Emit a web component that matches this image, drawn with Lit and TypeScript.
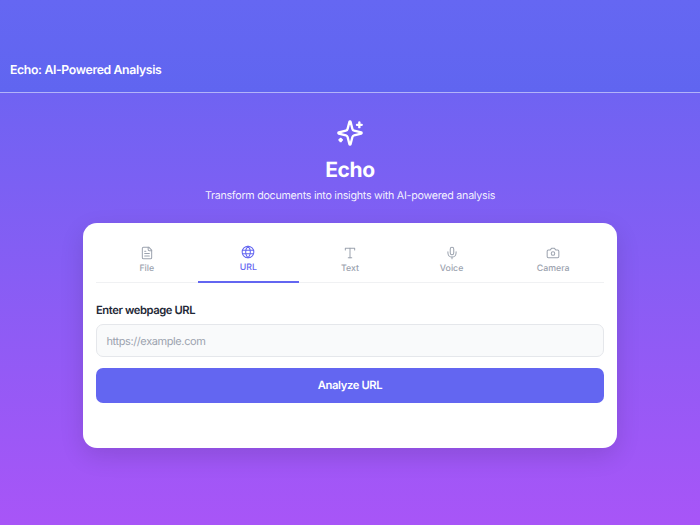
import { LitElement, html, css, svg } from "lit";
import { customElement } from "lit/decorators.js";

const icons: Record<string, unknown> = {
  File: svg`<path d="M15 2H6a2 2 0 0 0-2 2v16a2 2 0 0 0 2 2h12a2 2 0 0 0 2-2V7Z"/><path d="M14 2v4a2 2 0 0 0 2 2h4"/><path d="M10 9H8"/><path d="M16 13H8"/><path d="M16 17H8"/>`,
  URL: svg`<circle cx="12" cy="12" r="10"/><path d="M12 2a14.5 14.5 0 0 0 0 20 14.5 14.5 0 0 0 0-20"/><path d="M3 9h18"/><path d="M3 15h18"/>`,
  Text: svg`<path d="M4 7V4h16v3"/><path d="M9 20h6"/><path d="M12 4v16"/>`,
  Voice: svg`<path d="M12 2a3 3 0 0 0-3 3v7a3 3 0 0 0 6 0V5a3 3 0 0 0-3-3Z"/><path d="M19 10v2a7 7 0 0 1-14 0v-2"/><path d="M12 19v3"/>`,
  Camera: svg`<path d="M14.5 4h-5L7 7H4a2 2 0 0 0-2 2v9a2 2 0 0 0 2 2h16a2 2 0 0 0 2-2V9a2 2 0 0 0-2-2h-3l-2.5-3z"/><circle cx="12" cy="13" r="3"/>`,
};

const tabs = ["File", "URL", "Text", "Voice", "Camera"];

@customElement("app-root")
export class AppRoot extends LitElement {
  static styles = css`
    :host {
      display: block;
      height: 525px;
      overflow: hidden;
      background: linear-gradient(180deg, #6366f1 0%, #a855f7 100%);
      font-family: Inter, "Noto Sans", sans-serif;
      text-rendering: geometricPrecision;
      color: #fff;
    }
    .bar {
      height: 93px;
      box-sizing: border-box;
      border-bottom: 1px solid rgba(255, 255, 255, 0.5);
      background: linear-gradient(180deg, #6567f2, #6065f0);
      display: flex;
      align-items: flex-end;
      padding: 0 10px 13px;
      font-size: 12.25px;
      letter-spacing: -0.35px;
      font-weight: 600;
      line-height: 18px;
    }
    .hero {
      display: flex;
      flex-direction: column;
      align-items: center;
      padding-top: 26px;
    }
    .spark {
      width: 28px;
      height: 28px;
      fill: none;
      stroke: #fff;
      stroke-width: 2;
      stroke-linecap: round;
      stroke-linejoin: round;
    }
    h1 {
      margin: 10px 0 0;
      font-size: 21px;
      letter-spacing: -0.4px;
      font-weight: 700;
      line-height: 28px;
    }
    .sub {
      margin: 2px 0 0;
      font-size: 10.7px;
      letter-spacing: -0.26px;
      line-height: 18px;
      color: rgba(255, 255, 255, 0.92);
    }
    .card {
      box-sizing: border-box;
      width: 534.5px;
      height: 224.5px;
      margin: 18.25px auto 0;
      padding: 14px 13.25px;
      background: #fff;
      border-radius: 14px;
      box-shadow: 0 8px 24px rgba(0, 0, 0, 0.12);
    }
    .tabs {
      display: grid;
      grid-template-columns: repeat(5, 1fr);
      border-bottom: 1px solid #f0f1f3;
    }
    .tab {
      height: 45px;
      padding-top: 2px;
      display: flex;
      flex-direction: column;
      align-items: center;
      justify-content: center;
      gap: 2px;
      box-sizing: border-box;
      color: #9ca3af;
      font-size: 8.8px;
      font-weight: 500;
      line-height: 13px;
    }
    .tab.on {
      color: #6366f1;
      height: 46px;
      padding-top: 0;
      margin-bottom: -1px;
      border-bottom: 2px solid #6366f1;
    }
    .tab svg {
      width: 14px;
      height: 14px;
      fill: none;
      stroke: currentColor;
      stroke-width: 1.75;
      stroke-linecap: round;
      stroke-linejoin: round;
    }
    label {
      display: block;
      margin-top: 18px;
      color: #1f2937;
      font-size: 11.2px;
      letter-spacing: -0.4px;
      font-weight: 600;
      line-height: 18px;
    }
    .field {
      box-sizing: border-box;
      height: 33px;
      margin-top: 5px;
      padding: 0 9.5px;
      display: flex;
      align-items: center;
      background: #f9fafb;
      border: 1px solid #e5e7eb;
      border-radius: 7px;
      color: #9ca3af;
      font-size: 11px;
      letter-spacing: -0.4px;
    }
    .btn {
      height: 35px;
      margin-top: 10.5px;
      display: flex;
      align-items: center;
      justify-content: center;
      background: #6366f1;
      border-radius: 7px;
      font-size: 11.2px;
      letter-spacing: -0.36px;
      font-weight: 600;
    }
  `;

  render() {
    return html`
      <div class="bar">Echo: AI-Powered Analysis</div>
      <div class="hero">
        <svg class="spark" viewBox="0 0 24 24">
          <path d="M9.937 15.5A2 2 0 0 0 8.5 14.063l-6.135-1.582a.5.5 0 0 1 0-.962L8.5 9.936A2 2 0 0 0 9.937 8.5l1.582-6.135a.5.5 0 0 1 .963 0L14.063 8.5A2 2 0 0 0 15.5 9.937l6.135 1.581a.5.5 0 0 1 0 .964L15.5 14.063a2 2 0 0 0-1.437 1.437l-1.582 6.135a.5.5 0 0 1-.963 0z" />
          <path d="M20 3v4" /><path d="M22 5h-4" /><path d="M4 17v2" /><path d="M5 18H3" />
        </svg>
        <h1>Echo</h1>
        <p class="sub">Transform documents into insights with AI-powered analysis</p>
      </div>
      <div class="card">
        <div class="tabs">
          ${tabs.map(
            (t) => html`<div class="tab ${t === "URL" ? "on" : ""}">
              <svg viewBox="0 0 24 24">${icons[t]}</svg>
              <span>${t}</span>
            </div>`
          )}
        </div>
        <label>Enter webpage URL</label>
        <div class="field">https://example.com</div>
        <div class="btn">Analyze URL</div>
      </div>
    `;
  }
}
